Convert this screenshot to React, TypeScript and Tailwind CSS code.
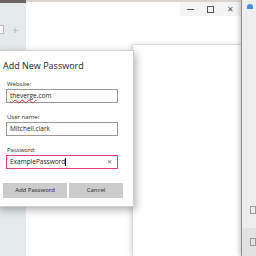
import React from "react";

export default function App() {
  const font = { fontFamily: '"Open Sans", "Noto Sans", sans-serif' };
  return (
    <div className="relative w-[256px] h-[256px] overflow-hidden bg-white flex" style={font}>
      {/* left sidebar */}
      <div className="w-[26px] h-full bg-[#e4e9ec] flex flex-col shrink-0">
        <div className="h-[3px] bg-[#6b6360]" />
        <div className="mt-[21px] flex items-center gap-[8px] -ml-[4px]">
          <div className="w-[8px] h-[9px] border border-[#b8bcbf] bg-white" />
          <div className="text-[11px] text-[#a8adb0] leading-none">+</div>
        </div>
      </div>
      {/* main window */}
      <div className="w-[215px] h-full flex flex-col shrink-0">
        <div className="h-[2px] bg-[#d9d4cf]" />
        <div className="flex justify-end">
          <div className="w-[61px] h-[14px] bg-[#f4f4f4] flex items-center">
            <div className="w-[20px] flex justify-center"><div className="w-[7px] h-px bg-[#555]" /></div>
            <div className="w-[20px] flex justify-center"><div className="w-[7px] h-[7px] border border-[#555]" /></div>
            <div className="w-[20px] flex justify-center text-[8px] text-[#555] leading-none">✕</div>
          </div>
        </div>
        <div className="flex-1 flex justify-end pt-[28px]">
          <div className="w-[109px] h-full bg-white border-l border-t border-[#dcdcdc] shadow-[-2px_0_4px_rgba(0,0,0,0.12)]" />
        </div>
      </div>
      {/* right window */}
      <div className="flex-1 h-full bg-[#eeeeee] border-l border-[#8f8f8f] shadow-[-2px_0_4px_rgba(0,0,0,0.2)] flex flex-col">
        <div className="mt-[4px] ml-[5px] w-[6px] h-[5px] rounded-t-full bg-[#4a90d9]" />
        <div className="mt-[197px] ml-[8px] w-[6px] h-[8px] border border-[#999]" />
        <div className="mt-[14px] flex-1 bg-[#e2e2e2] pt-[10px] pl-[8px]">
          <div className="w-[6px] h-[8px] border border-[#999]" />
        </div>
      </div>
      {/* dialog */}
      <div className="absolute left-[-4px] top-[50px] w-[138px] h-[157px] bg-white border border-[#cfcfcf] shadow-[2px_3px_8px_rgba(0,0,0,0.3)] pl-[6px] pt-[9px] flex flex-col">
        <div className="text-[9px] text-[#1e1e1e] leading-[12px] h-[12px]">Add New Password</div>
        <div className="ml-[3px] w-[112px] flex flex-col">
          <div className="mt-[8px] text-[6px] text-[#2a2a2a] leading-[8px] h-[8px] pl-px">Website:</div>
          <div className="mt-px h-[14px] border border-[#999] flex items-center px-[3px] text-[6.5px] text-[#222]">
            <span className="underline decoration-wavy decoration-[#e03030] decoration-1 underline-offset-1">theverge</span>.com
          </div>
          <div className="mt-[10px] text-[6px] text-[#2a2a2a] leading-[8px] h-[8px] pl-px">User name:</div>
          <div className="mt-px h-[14px] border border-[#999] flex items-center px-[3px] text-[6.5px] text-[#222]">Mitchell.clark</div>
          <div className="mt-[10px] text-[6px] text-[#2a2a2a] leading-[8px] h-[8px] pl-px">Password:</div>
          <div className="mt-px h-[14px] border border-[#e0407e] flex items-center px-[3px] text-[6.5px] text-[#222]">
            <span>ExamplePassword</span>
            <span className="w-px h-[8px] bg-black" />
            <span className="ml-auto mr-[2px] text-[6px] text-[#666]">✕</span>
          </div>
        </div>
        <div className="mt-[14px] flex gap-[2px]">
          <div className="w-[64px] h-[15px] bg-[#cccccc] flex items-center justify-center text-[6px] text-[#222]">Add Password</div>
          <div className="w-[54px] h-[15px] bg-[#cccccc] flex items-center justify-center text-[6px] text-[#222]">Cancel</div>
        </div>
      </div>
    </div>
  );
}
